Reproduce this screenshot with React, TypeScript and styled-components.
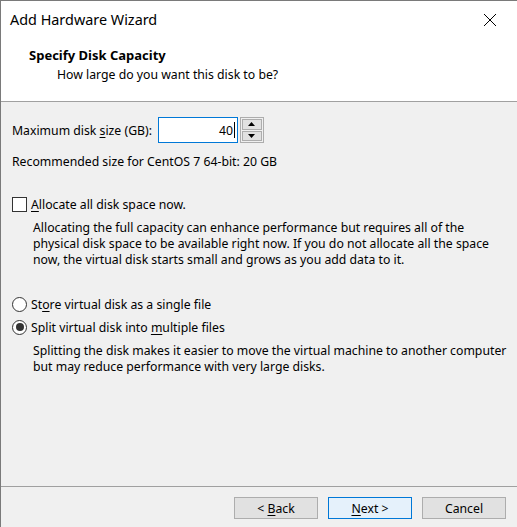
import React from 'react';
import styled, { createGlobalStyle } from 'styled-components';

const GlobalStyle = createGlobalStyle`
  html, body {
    margin: 0;
    padding: 0;
    background: #f0f0f0;
  }
  body {
    font-family: 'Noto Sans', 'Liberation Sans', sans-serif;
    font-size: 12.25px;
    color: #000;
  }
`;

const Window = styled.div`
  width: 517px;
  height: 527px;
  box-sizing: border-box;
  border-top: 1px solid #7a7a7a;
  border-left: 1px solid #7a7a7a;
  background: #f0f0f0;
  display: flex;
  flex-direction: column;
  overflow: hidden;
`;

const TitleBar = styled.div`
  height: 37px;
  background: #fff;
  display: flex;
  align-items: center;
  justify-content: space-between;
  padding-left: 9px;
  font-size: 14.4px;
`;

const CloseButton = styled.button`
  width: 46px;
  height: 37px;
  border: none;
  background: transparent;
  display: flex;
  align-items: center;
  justify-content: center;
  padding: 0;
  margin-right: 4px;
`;

const Header = styled.div`
  background: #fff;
  height: 64px;
  box-sizing: border-box;
  border-bottom: 1px solid #a0a0a0;
  padding: 8px 0 0 28px;
`;

const HeaderTitle = styled.div`
  font-weight: bold;
  font-size: 13px;
  line-height: 19px;
`;

const HeaderSub = styled.div`
  padding-left: 28px;
  line-height: 19px;
`;

const Content = styled.div`
  flex: 1;
  padding: 15px 0 0 11px;
  display: flex;
  flex-direction: column;
`;

const SizeRow = styled.div`
  display: flex;
  align-items: center;
  gap: 6px;
  height: 26px;
`;

const SpinBox = styled.div`
  display: flex;
  align-items: center;
  gap: 2px;
`;

const NumberField = styled.div`
  width: 80px;
  height: 26px;
  box-sizing: border-box;
  border: 1px solid #0078d7;
  background: #fff;
  display: flex;
  align-items: center;
  justify-content: flex-end;
  padding-right: 2px;
`;

const Caret = styled.span`
  display: inline-block;
  width: 1px;
  height: 16px;
  background: #000;
  margin-left: 1px;
`;

const Spinner = styled.div`
  width: 24px;
  height: 26px;
  box-sizing: border-box;
  border: 1px solid #adadad;
  display: flex;
  flex-direction: column;
  gap: 1px;
  padding: 1px;
  background: #f0f0f0;
`;

const SpinArrow = styled.div`
  flex: 1;
  background: #e1e1e1;
  border: 1px solid #adadad;
  display: flex;
  align-items: center;
  justify-content: center;
`;

const Line = styled.div<{ $top?: number }>`
  margin-top: ${p => p.$top ?? 0}px;
  line-height: 16px;
`;

const OptionRow = styled.label<{ $top?: number }>`
  display: flex;
  align-items: center;
  gap: 4px;
  margin-top: ${p => p.$top ?? 0}px;
  height: 18px;
`;

const CheckBoxBox = styled.span`
  width: 13px;
  height: 13px;
  border: 1px solid #333;
  background: #fff;
  display: inline-block;
`;

const RadioCircle = styled.span<{ $checked?: boolean }>`
  width: 13px;
  height: 13px;
  border: 1px solid #333;
  border-radius: 50%;
  background: #fff;
  display: inline-flex;
  align-items: center;
  justify-content: center;
  &::after {
    content: '';
    width: 8px;
    height: 8px;
    border-radius: 50%;
    background: ${p => (p.$checked ? '#333' : 'transparent')};
  }
`;

const Paragraph = styled.div<{ $top?: number }>`
  margin-top: ${p => p.$top ?? 0}px;
  padding-left: 21px;
  line-height: 16px;
`;

const Key = styled.span`
  text-decoration: underline;
  text-underline-offset: 2px;
`;

const Footer = styled.div`
  height: 41px;
  box-sizing: border-box;
  border-top: 1px solid #a0a0a0;
  display: flex;
  justify-content: flex-end;
  gap: 10px;
  padding: 10px 11px 0 0;
`;

const Button = styled.button<{ $default?: boolean }>`
  width: 84px;
  height: 22px;
  box-sizing: border-box;
  font: inherit;
  color: #000;
  background: ${p => (p.$default ? '#e5f1fb' : '#e1e1e1')};
  border: 1px solid ${p => (p.$default ? '#0078d7' : '#adadad')};
  padding: 0;
`;

export default function App() {
  return (
    <>
      <GlobalStyle />
      <Window>
        <TitleBar>
          <span>Add Hardware Wizard</span>
          <CloseButton aria-label="Close">
            <svg width="14" height="14" viewBox="0 0 14 14">
              <path d="M1 1 L13 13 M13 1 L1 13" stroke="#000" strokeWidth="1" />
            </svg>
          </CloseButton>
        </TitleBar>
        <Header>
          <HeaderTitle>Specify Disk Capacity</HeaderTitle>
          <HeaderSub>How large do you want this disk to be?</HeaderSub>
        </Header>
        <Content>
          <SizeRow>
            <span>
              Maximum disk <Key>s</Key>ize (GB):
            </span>
            <SpinBox>
              <NumberField>
                40
                <Caret />
              </NumberField>
              <Spinner>
                <SpinArrow>
                  <svg width="7" height="4" viewBox="0 0 7 4">
                    <path d="M3.5 0 L7 4 L0 4 Z" fill="#000" />
                  </svg>
                </SpinArrow>
                <SpinArrow>
                  <svg width="7" height="4" viewBox="0 0 7 4">
                    <path d="M0 0 L7 0 L3.5 4 Z" fill="#000" />
                  </svg>
                </SpinArrow>
              </Spinner>
            </SpinBox>
          </SizeRow>
          <Line $top={11}>Recommended size for CentOS 7 64-bit: 20 GB</Line>
          <OptionRow $top={25}>
            <CheckBoxBox />
            <span>
              <Key>A</Key>llocate all disk space now.
            </span>
          </OptionRow>
          <Paragraph $top={7}>
            Allocating the full capacity can enhance performance but requires all of the
            <br />
            physical disk space to be available right now. If you do not allocate all the space
            <br />
            now, the virtual disk starts small and grows as you add data to it.
          </Paragraph>
          <OptionRow $top={27}>
            <RadioCircle />
            <span>
              St<Key>o</Key>re virtual disk as a single file
            </span>
          </OptionRow>
          <OptionRow $top={5}>
            <RadioCircle $checked />
            <span>
              Split virtual disk into <Key>m</Key>ultiple files
            </span>
          </OptionRow>
          <Paragraph $top={7}>
            Splitting the disk makes it easier to move the virtual machine to another computer
            <br />
            but may reduce performance with very large disks.
          </Paragraph>
        </Content>
        <Footer>
          <Button>
            &lt; <Key>B</Key>ack
          </Button>
          <Button $default>
            <Key>N</Key>ext &gt;
          </Button>
          <Button>Cancel</Button>
        </Footer>
      </Window>
    </>
  );
}
